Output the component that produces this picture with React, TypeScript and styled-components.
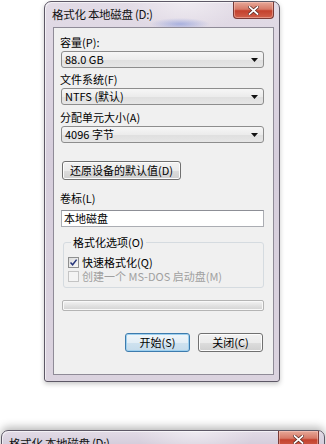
import React from "react";
import styled, { createGlobalStyle } from "styled-components";

const Global = createGlobalStyle`
  html, body { margin: 0; padding: 0; background: #ffffff; }
  body { font-family: "Noto Sans CJK SC", "Liberation Sans", sans-serif; }
`;

const Page = styled.div`
  width: 326px;
  height: 444px;
  overflow: hidden;
  background: #ffffff;
  display: flex;
  flex-direction: column;
`;

const Window = styled.div<{ $wide?: boolean }>`
  box-sizing: border-box;
  margin: ${(p) => (p.$wide ? "48px 1px 0 1px" : "1px 0 0 44px")};
  width: ${(p) => (p.$wide ? "324px" : "236px")};
  flex-shrink: 0;
  border: 1px solid #5d5866;
  border-radius: 7px 7px 3px 3px;
  padding: 0 5px 6px 8px;
  background:
    radial-gradient(ellipse 30px 6px at 135px 22px, rgba(120, 140, 215, 0.55), rgba(120, 140, 215, 0) 100%),
    radial-gradient(ellipse 60px 30px at 60% 0px, rgba(255, 255, 255, 0.45), rgba(255, 255, 255, 0) 100%),
    linear-gradient(180deg, #e2dbe6 0%, #d6cedc 40%, #dbd3df 100%);
  box-shadow: inset 1px 1px 0 rgba(255,255,255,0.6), ${(p) =>
    p.$wide ? "0 -3px 8px rgba(0,0,0,0.28)" : "0 2px 5px rgba(0,0,0,0.22)"};
`;

const TitleBar = styled.div`
  height: 25px;
  display: flex;
  justify-content: space-between;
  align-items: flex-start;
`;

const TitleText = styled.div`
  margin-top: 5px;
  margin-left: -1px;
  font-size: 11.5px;
  line-height: 15px;
  color: #111;
  letter-spacing: -0.3px;
  white-space: nowrap;
`;

const CloseButton = styled.div`
  width: 41px;
  height: 17px;
  box-sizing: border-box;
  border: 1px solid #7a3a36;
  border-top: none;
  border-radius: 0 0 4px 4px;
  background: linear-gradient(180deg, #e7a898 0%, #d77a68 45%, #c4412d 55%, #d0604b 100%);
  display: flex;
  align-items: center;
  justify-content: center;
  box-shadow: inset 0 0 0 1px rgba(255, 210, 200, 0.45);
`;

const Client = styled.div`
  box-sizing: border-box;
  height: 348px;
  border: 1px solid #8f8b97;
  background: #f0f0f0;
  padding: 7px 9px 0 7px;
  display: flex;
  flex-direction: column;
  font-size: 11px;
  color: #000;
`;

const Label = styled.div<{ $gap?: number }>`
  height: 14px;
  line-height: 14px;
  margin-top: ${(p) => p.$gap ?? 0}px;
  margin-left: -1px;
  white-space: nowrap;
`;

const Select = styled.div`
  box-sizing: border-box;
  margin-top: 2px;
  height: 17px;
  border: 1px solid #8d8d8d;
  border-radius: 3px;
  background: linear-gradient(180deg, #f6f6f6 0%, #ececec 50%, #dfdfdf 51%, #e6e6e6 100%);
  display: flex;
  align-items: center;
  justify-content: space-between;
  padding: 0 5px 0 3px;
  line-height: 15px;
`;

const Arrow = styled.svg`
  width: 7px;
  height: 4px;
  flex-shrink: 0;
`;

const Button = styled.div<{ $default?: boolean }>`
  box-sizing: border-box;
  height: 19px;
  border: 1px solid ${(p) => (p.$default ? "#3d7bad" : "#707070")};
  border-radius: 3px;
  background: ${(p) =>
    p.$default
      ? "linear-gradient(180deg, #f0f6fa 0%, #e3eef6 50%, #cfe2ef 51%, #c4dbeb 100%)"
      : "linear-gradient(180deg, #f2f2f2 0%, #ebebeb 50%, #dddddd 51%, #cfcfcf 100%)"};
  box-shadow: inset 0 0 0 1px ${(p) => (p.$default ? "#9ed0ef" : "#fcfcfc")};
  display: flex;
  align-items: center;
  justify-content: center;
  line-height: 15px;
  white-space: nowrap;
`;

const RestoreButton = styled(Button)`
  margin-top: 18px;
  align-self: flex-start;
  width: 119px;
  margin-left: 1px;
`;

const TextBox = styled.div`
  box-sizing: border-box;
  margin-top: 5px;
  height: 17px;
  border: 1px solid #abadb3;
  border-top-color: #8d8f96;
  background: #ffffff;
  padding: 0 2px;
  line-height: 15px;
`;

const Group = styled.fieldset`
  margin: 8px 0 0 2px;
  padding: 6px 4px 4px 4px;
  border: 1px solid #d5dbe0;
  border-radius: 3px;
  display: flex;
  flex-direction: column;
  min-width: 0;
`;

const Legend = styled.legend`
  padding: 0 2px;
  margin-left: 3px;
  line-height: 14px;
  font-size: 11px;
`;

const CheckRow = styled.div<{ $disabled?: boolean }>`
  display: flex;
  align-items: center;
  gap: 3px;
  height: 14px;
  line-height: 14px;
  color: ${(p) => (p.$disabled ? "#a0a0a0" : "#000")};
  white-space: nowrap;
`;

const Box = styled.div<{ $disabled?: boolean }>`
  box-sizing: border-box;
  width: 11px;
  height: 11px;
  border: 1px solid ${(p) => (p.$disabled ? "#c4c4c4" : "#8e8f8f")};
  background: ${(p) =>
    p.$disabled ? "#f4f4f4" : "linear-gradient(135deg, #dcdcdc 0%, #f8f8f8 100%)"};
  display: flex;
  align-items: center;
  justify-content: center;
`;

const Progress = styled.div`
  box-sizing: border-box;
  margin-top: 12px;
  margin-left: 1px;
  height: 11px;
  border: 1px solid #b4b4b4;
  border-radius: 2px;
  background: linear-gradient(180deg, #f4f4f4 0%, #e4e4e4 45%, #d2d2d2 100%);
  box-shadow: inset 0 0 0 1px #f8f8f8;
`;

const ButtonRow = styled.div`
  margin-top: 22px;
  display: flex;
  justify-content: flex-end;
  gap: 8px;
  padding-right: 1px;
`;

const DialogButton = styled(Button)`
  width: 65px;
`;

const CloseGlyph = () => (
  <svg width="11" height="9" viewBox="0 0 11 9">
    <path d="M1.5 1 L9.5 8 M9.5 1 L1.5 8" stroke="#5b2a24" strokeWidth="3.2" strokeLinecap="square" />
    <path d="M1.5 1 L9.5 8 M9.5 1 L1.5 8" stroke="#ffffff" strokeWidth="1.7" strokeLinecap="square" />
  </svg>
);

const DropArrow = () => (
  <Arrow viewBox="0 0 7 4">
    <path d="M0 0 H7 L3.5 4 Z" fill="#111" />
  </Arrow>
);

export default function App() {
  return (
    <>
      <Global />
      <Page>
        <Window>
          <TitleBar>
            <TitleText>格式化 本地磁盘 (D:)</TitleText>
            <CloseButton>
              <CloseGlyph />
            </CloseButton>
          </TitleBar>
          <Client>
            <Label>容量(P):</Label>
            <Select>
              <span>88.0 GB</span>
              <DropArrow />
            </Select>
            <Label $gap={4}>文件系统(F)</Label>
            <Select>
              <span>NTFS (默认)</span>
              <DropArrow />
            </Select>
            <Label $gap={5}>分配单元大小(A)</Label>
            <Select>
              <span>4096 字节</span>
              <DropArrow />
            </Select>
            <RestoreButton>还原设备的默认值(D)</RestoreButton>
            <Label $gap={11}>卷标(L)</Label>
            <TextBox>本地磁盘</TextBox>
            <Group>
              <Legend>格式化选项(O)</Legend>
              <CheckRow>
                <Box>
                  <svg width="9" height="9" viewBox="0 0 9 9">
                    <path d="M1.5 4.5 L3.6 6.8 L7.6 1.6" fill="none" stroke="#26357a" strokeWidth="1.5" />
                  </svg>
                </Box>
                快速格式化(Q)
              </CheckRow>
              <CheckRow $disabled>
                <Box $disabled />
                创建一个 MS-DOS 启动盘(M)
              </CheckRow>
            </Group>
            <Progress />
            <ButtonRow>
              <DialogButton $default>开始(S)</DialogButton>
              <DialogButton>关闭(C)</DialogButton>
            </ButtonRow>
          </Client>
        </Window>
        <Window $wide>
          <TitleBar>
            <TitleText>格式化 本地磁盘 (D:)</TitleText>
            <CloseButton>
              <CloseGlyph />
            </CloseButton>
          </TitleBar>
        </Window>
      </Page>
    </>
  );
}
